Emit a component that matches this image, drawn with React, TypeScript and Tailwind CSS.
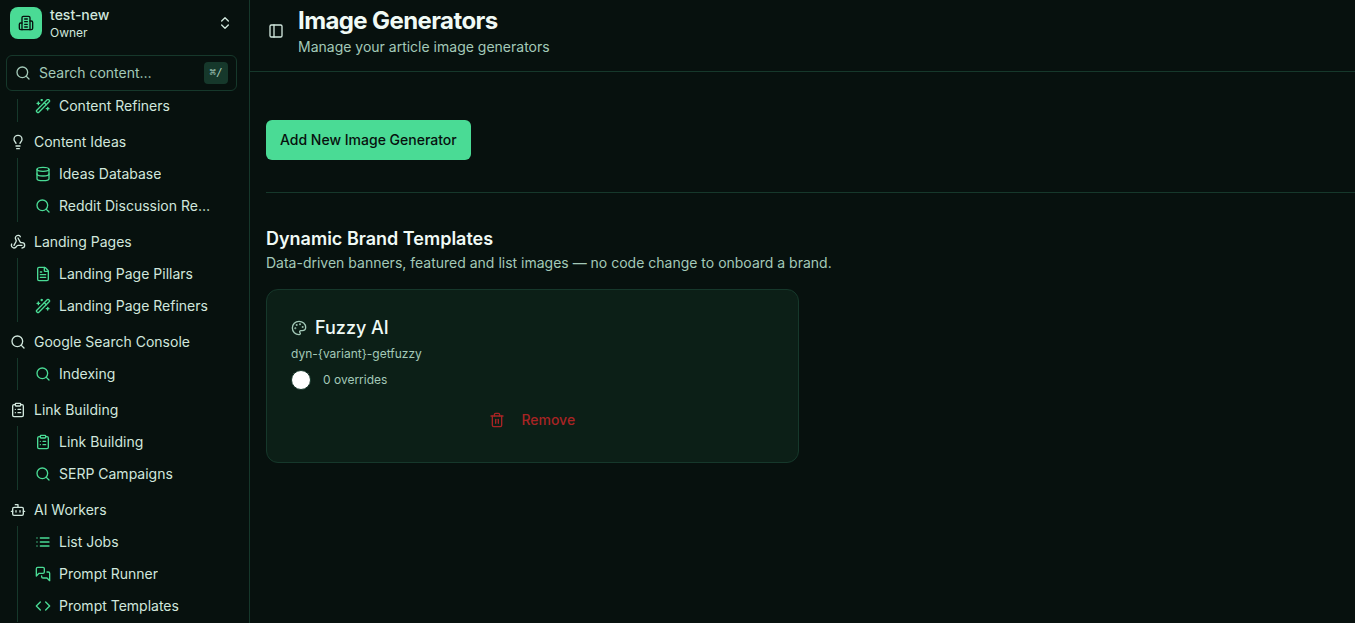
import type { ComponentType, ReactNode } from "react";
import {
  Bot,
  ChevronsUpDown,
  ClipboardList,
  Code,
  Database,
  FileText,
  Lightbulb,
  Palette,
  PanelLeft,
  Search,
  Trash2,
  WandSparkles,
  Webhook,
} from "lucide-react";

interface IconProps {
  className?: string;
}

interface NavItem {
  label: string;
  icon: ComponentType<IconProps>;
}

interface NavGroup extends NavItem {
  items: NavItem[];
}

function StrokeIcon({ className, children }: IconProps & { children: ReactNode }) {
  return (
    <svg
      className={className}
      viewBox="0 0 24 24"
      fill="none"
      stroke="currentColor"
      strokeWidth="2"
      strokeLinecap="round"
      strokeLinejoin="round"
      aria-hidden="true"
    >
      {children}
    </svg>
  );
}

function BuildingIcon({ className }: IconProps) {
  return (
    <StrokeIcon className={className}>
      <path d="M6 22V4a2 2 0 0 1 2-2h8a2 2 0 0 1 2 2v18Z" />
      <path d="M6 12H4a2 2 0 0 0-2 2v6a2 2 0 0 0 2 2h2" />
      <path d="M18 9h2a2 2 0 0 1 2 2v9a2 2 0 0 1-2 2h-2" />
      <path d="M10 6h4" />
      <path d="M10 10h4" />
      <path d="M10 14h4" />
      <path d="M10 18h4" />
    </StrokeIcon>
  );
}

function ListIcon({ className }: IconProps) {
  return (
    <StrokeIcon className={className}>
      <path d="M3 6h.01" />
      <path d="M3 12h.01" />
      <path d="M3 18h.01" />
      <path d="M8 6h13" />
      <path d="M8 12h13" />
      <path d="M8 18h13" />
    </StrokeIcon>
  );
}

function MessagesIcon({ className }: IconProps) {
  return (
    <StrokeIcon className={className}>
      <path d="M14 9a2 2 0 0 1-2 2H6l-4 4V4a2 2 0 0 1 2-2h8a2 2 0 0 1 2 2z" />
      <path d="M18 9h2a2 2 0 0 1 2 2v11l-4-4h-6a2 2 0 0 1-2-2v-1" />
    </StrokeIcon>
  );
}

const navGroups: NavGroup[] = [
  {
    label: "Content Ideas",
    icon: Lightbulb,
    items: [
      { label: "Ideas Database", icon: Database },
      { label: "Reddit Discussion Research", icon: Search },
    ],
  },
  {
    label: "Landing Pages",
    icon: Webhook,
    items: [
      { label: "Landing Page Pillars", icon: FileText },
      { label: "Landing Page Refiners", icon: WandSparkles },
    ],
  },
  {
    label: "Google Search Console",
    icon: Search,
    items: [{ label: "Indexing", icon: Search }],
  },
  {
    label: "Link Building",
    icon: ClipboardList,
    items: [
      { label: "Link Building", icon: ClipboardList },
      { label: "SERP Campaigns", icon: Search },
    ],
  },
  {
    label: "AI Workers",
    icon: Bot,
    items: [
      { label: "List Jobs", icon: ListIcon },
      { label: "Prompt Runner", icon: MessagesIcon },
      { label: "Prompt Templates", icon: Code },
    ],
  },
];

function SubNav({ items }: { items: NavItem[] }) {
  return (
    <ul className="ml-[17px] mr-8 border-l border-[#16382b] pl-[17px]">
      {items.map(({ label, icon: Icon }) => (
        <li key={label}>
          <a href="#" className="flex h-8 items-center gap-2">
            <Icon className="size-4 shrink-0 text-[#4adb95]" />
            <span className="truncate">{label}</span>
          </a>
        </li>
      ))}
    </ul>
  );
}

function Sidebar() {
  return (
    <aside className="flex h-screen w-[250px] shrink-0 flex-col overflow-hidden border-r border-[#16382b] text-sm text-[#d1e7dd]">
      <button className="flex items-center gap-2 pt-[5px] pr-4 pl-2.5 text-left">
        <span className="flex size-8 items-center justify-center rounded-lg bg-[#4adb95] text-[#07110e]">
          <BuildingIcon className="size-4" />
        </span>
        <span className="flex flex-1 flex-col">
          <span className="font-medium leading-5">test-new</span>
          <span className="text-xs">Owner</span>
        </span>
        <ChevronsUpDown className="size-4" />
      </button>

      <div className="mt-3.5 mr-3 ml-1.5 flex h-9 shrink-0 items-center gap-2 rounded-md border border-[#16382b] px-2">
        <Search className="size-4 shrink-0 text-[#a3c9b8]" />
        <input
          type="text"
          aria-label="Search content"
          placeholder="Search content…"
          className="min-w-0 flex-1 bg-transparent outline-none placeholder:text-[#a3c9b8]"
        />
        <kbd className="flex h-[22px] w-6 items-center justify-center rounded bg-[#16382b] font-['DejaVu_Sans_Mono',monospace] text-[11px] text-[#a3c9b8]">
          ⌘/
        </kbd>
      </div>

      {/* nav list, partly scrolled under the search box */}
      <nav className="mt-2 flex-1 overflow-hidden">
        <div className="-mt-[9px] flex flex-col gap-1">
          <SubNav items={[{ label: "Content Refiners", icon: WandSparkles }]} />
          {navGroups.map(({ label, icon: Icon, items }) => (
            <section key={label}>
              <a href="#" className="flex h-8 items-center gap-2 pl-2.5">
                <Icon className="size-4 shrink-0" />
                <span>{label}</span>
              </a>
              <SubNav items={items} />
            </section>
          ))}
        </div>
      </nav>
    </aside>
  );
}

function TemplateCard() {
  return (
    <article className="rounded-xl border border-[#16382b] bg-[#0c1f17] p-6">
      <h3 className="flex items-center gap-2 text-lg font-medium leading-7 text-[#f0faf5]">
        <Palette className="size-4 text-[#a3c9b8]" />
        Fuzzy AI
      </h3>
      <p className="mt-1 text-xs text-[#a3c9b8]">{"dyn-{variant}-getfuzzy"}</p>
      <div className="mt-2 flex items-center gap-3 text-xs text-[#a3c9b8]">
        <span className="size-5 rounded-full border border-[#16382b] bg-white" />
        0 overrides
      </div>
      <button className="mt-3 flex h-9 w-full items-center justify-center gap-4 text-sm font-medium text-[#a82424]">
        <Trash2 className="size-4" />
        Remove
      </button>
    </article>
  );
}

export default function App() {
  return (
    <div className="flex min-h-screen bg-[#07110e] font-['Inter','Liberation_Sans',sans-serif] text-[#f0faf5]">
      <Sidebar />
      <main className="min-w-0 flex-1">
        <header className="flex items-center gap-3.5 border-b border-[#16382b] pt-[5px] pb-3.5 pl-[18px]">
          <button aria-label="Toggle sidebar">
            <PanelLeft className="size-4 text-[#d1e7dd]" />
          </button>
          <div>
            <h1 className="text-2xl font-bold tracking-tight">Image Generators</h1>
            <p className="text-sm text-[#a3c9b8]">Manage your article image generators</p>
          </div>
        </header>

        <div className="pt-12 pl-4">
          <button className="h-10 rounded-md bg-[#4adb95] px-3.5 text-sm font-medium text-[#07110e]">
            Add New Image Generator
          </button>
          <hr className="mt-8 border-[#16382b]" />
          <section className="mt-8">
            <h2 className="text-lg font-semibold leading-7">Dynamic Brand Templates</h2>
            <p className="text-sm text-[#a3c9b8]">
              Data-driven banners, featured and list images — no code change to onboard a brand.
            </p>
            <div className="mt-4 grid grid-cols-2 gap-6">
              <TemplateCard />
            </div>
          </section>
        </div>
      </main>
    </div>
  );
}
